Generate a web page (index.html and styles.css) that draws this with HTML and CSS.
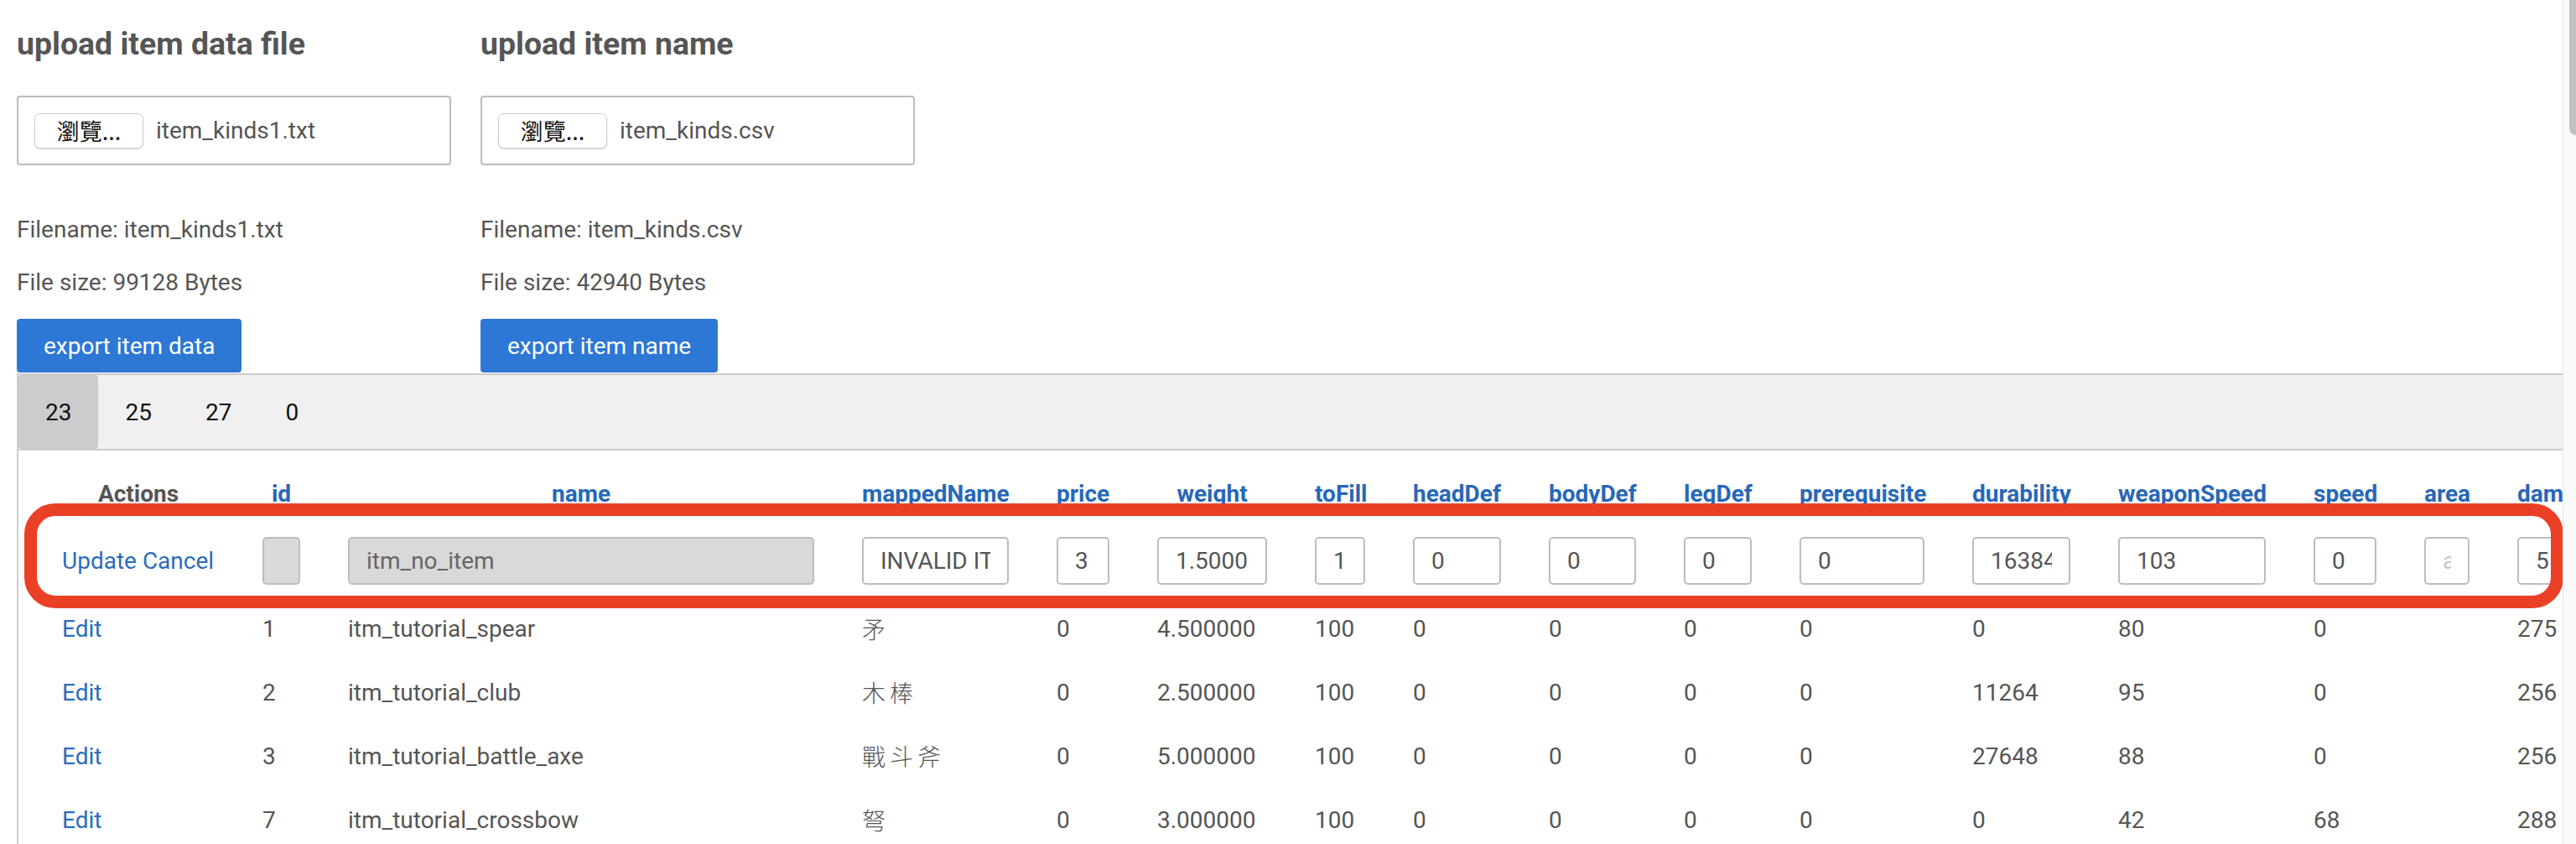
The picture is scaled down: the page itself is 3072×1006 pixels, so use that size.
FILE: index.html
```html
<!DOCTYPE html>
<html lang="zh-Hant">
<head>
<meta charset="utf-8">
<title>Item editor</title>
<link rel="stylesheet" href="styles.css">
</head>
<body>
<div class="uploads">
  <section class="upload">
    <h3 class="upload-title">upload item data file</h3>
    <div class="file-box"><span class="browse">瀏覽...</span><span class="file-name">item_kinds1.txt</span></div>
    <p class="meta meta-first">Filename: item_kinds1.txt</p>
    <p class="meta">File size: 99128 Bytes</p>
    <button class="export" type="button">export item data</button>
  </section>
  <section class="upload">
    <h3 class="upload-title">upload item name</h3>
    <div class="file-box"><span class="browse">瀏覽...</span><span class="file-name">item_kinds.csv</span></div>
    <p class="meta meta-first">Filename: item_kinds.csv</p>
    <p class="meta">File size: 42940 Bytes</p>
    <button class="export" type="button">export item name</button>
  </section>
</div>

<div class="tabs-wrap">
  <div class="tabbar">
    <span class="tab active">23</span>
    <span class="tab">25</span>
    <span class="tab">27</span>
    <span class="tab">0</span>
  </div>

  <div class="grid">
    <div class="row head">
      <span class="th th-plain">Actions</span>
      <span class="th">id</span>
      <span class="th">name</span>
      <span class="th">mappedName</span>
      <span class="th">price</span>
      <span class="th">weight</span>
      <span class="th">toFill</span>
      <span class="th">headDef</span>
      <span class="th">bodyDef</span>
      <span class="th">legDef</span>
      <span class="th">prerequisite</span>
      <span class="th">durability</span>
      <span class="th">weaponSpeed</span>
      <span class="th">speed</span>
      <span class="th">area</span>
      <span class="th th-last">damage</span>
    </div>

    <div class="row edit">
      <span class="cell"><a class="link" href="#">Update</a> <a class="link" href="#">Cancel</a></span>
      <span class="cell"><input class="inp" type="text" disabled value=""></span>
      <span class="cell"><input class="inp" type="text" disabled value="itm_no_item"></span>
      <span class="cell"><input class="inp" type="text" value="INVALID ITEM"></span>
      <span class="cell"><input class="inp" type="text" value="3"></span>
      <span class="cell"><input class="inp" type="text" value="1.5000"></span>
      <span class="cell"><input class="inp" type="text" value="1"></span>
      <span class="cell"><input class="inp" type="text" value="0"></span>
      <span class="cell"><input class="inp" type="text" value="0"></span>
      <span class="cell"><input class="inp" type="text" value="0"></span>
      <span class="cell"><input class="inp" type="text" value="0"></span>
      <span class="cell"><input class="inp" type="text" value="16384"></span>
      <span class="cell"><input class="inp" type="text" value="103"></span>
      <span class="cell"><input class="inp" type="text" value="0"></span>
      <span class="cell"><input class="inp" type="text" placeholder="area"></span>
      <span class="cell"><input class="inp" type="text" value="512"></span>
    </div>

    <div class="row data">
      <span class="cell"><a class="link" href="#">Edit</a></span>
      <span class="cell">1</span>
      <span class="cell">itm_tutorial_spear</span>
      <span class="cell cjk">矛</span>
      <span class="cell">0</span>
      <span class="cell">4.500000</span>
      <span class="cell">100</span>
      <span class="cell">0</span>
      <span class="cell">0</span>
      <span class="cell">0</span>
      <span class="cell">0</span>
      <span class="cell">0</span>
      <span class="cell">80</span>
      <span class="cell">0</span>
      <span class="cell"></span>
      <span class="cell">275</span>
    </div>

    <div class="row data">
      <span class="cell"><a class="link" href="#">Edit</a></span>
      <span class="cell">2</span>
      <span class="cell">itm_tutorial_club</span>
      <span class="cell cjk">木棒</span>
      <span class="cell">0</span>
      <span class="cell">2.500000</span>
      <span class="cell">100</span>
      <span class="cell">0</span>
      <span class="cell">0</span>
      <span class="cell">0</span>
      <span class="cell">0</span>
      <span class="cell">11264</span>
      <span class="cell">95</span>
      <span class="cell">0</span>
      <span class="cell"></span>
      <span class="cell">256</span>
    </div>

    <div class="row data">
      <span class="cell"><a class="link" href="#">Edit</a></span>
      <span class="cell">3</span>
      <span class="cell">itm_tutorial_battle_axe</span>
      <span class="cell cjk">戰斗斧</span>
      <span class="cell">0</span>
      <span class="cell">5.000000</span>
      <span class="cell">100</span>
      <span class="cell">0</span>
      <span class="cell">0</span>
      <span class="cell">0</span>
      <span class="cell">0</span>
      <span class="cell">27648</span>
      <span class="cell">88</span>
      <span class="cell">0</span>
      <span class="cell"></span>
      <span class="cell">256</span>
    </div>

    <div class="row data">
      <span class="cell"><a class="link" href="#">Edit</a></span>
      <span class="cell">7</span>
      <span class="cell">itm_tutorial_crossbow</span>
      <span class="cell cjk">弩</span>
      <span class="cell">0</span>
      <span class="cell">3.000000</span>
      <span class="cell">100</span>
      <span class="cell">0</span>
      <span class="cell">0</span>
      <span class="cell">0</span>
      <span class="cell">0</span>
      <span class="cell">0</span>
      <span class="cell">42</span>
      <span class="cell">68</span>
      <span class="cell"></span>
      <span class="cell">288</span>
    </div>
  </div>
</div>

<div class="annot"></div>
<div class="scrollbar"><div class="thumb"></div></div>
</body>
</html>
```

FILE: styles.css
```css
html {
  overflow: hidden;
}

body {
  margin: 0;
  padding: 30px 0 0 20px;
  font-family: Roboto, "Noto Sans CJK TC", sans-serif;
  font-size: 28px;
  color: #555555;
  background: #ffffff;
}

/* ---------- upload section ---------- */
.uploads {
  display: flex;
  gap: 35px;
}

.upload {
  width: 518px;
  display: flex;
  flex-direction: column;
  align-items: flex-start;
}

.upload-title {
  margin: 0;
  font-size: 37.44px;
  line-height: 44px;
  font-weight: 700;
  color: #555555;
  white-space: nowrap;
}

.file-box {
  align-self: stretch;
  margin-top: 40px;
  height: 83px;
  box-sizing: border-box;
  border: 2px solid #bdbdbd;
  border-radius: 4px;
  display: flex;
  align-items: center;
  gap: 15px;
  padding-left: 19px;
}

.browse {
  width: 130px;
  height: 42px;
  box-sizing: border-box;
  border: 1px solid #d0d0d0;
  border-radius: 7px;
  box-shadow: 0 1px 2px rgba(0, 0, 0, 0.18);
  background: #ffffff;
  display: flex;
  align-items: center;
  justify-content: center;
  color: #111111;
  font-family: "Noto Sans CJK TC", Roboto, sans-serif;
  font-size: 27px;
}

.file-name {
  color: #555555;
}

.meta {
  margin: 23px 0 0;
  line-height: 40px;
  white-space: nowrap;
}

.meta-first {
  margin-top: 57px;
}

.export {
  margin-top: 23px;
  height: 64px;
  padding: 0 32px;
  border: 0;
  border-radius: 4px;
  background: #2d77d5;
  color: #ffffff;
  font-family: Roboto, sans-serif;
  font-size: 28px;
  white-space: nowrap;
}

/* ---------- tabs ---------- */
.tabs-wrap {
  margin-top: 1px;
  border-left: 2px solid #cccccc;
  overflow: hidden;
}

.tabbar {
  display: flex;
  height: 88px;
  background: #f0f0f0;
  border-top: 2px solid #cccccc;
  border-bottom: 2px solid #cccccc;
}

.tab {
  display: flex;
  align-items: center;
  padding: 0 32px;
  color: #111111;
}

.tab.active {
  background: #cccccc;
  border-radius: 4px;
}

/* ---------- grid table ---------- */
.grid {
  padding-top: 14px;
}

.row {
  display: grid;
  grid-template-columns: 182px 45px 556px 175px 63px 131px 60px 105px 104px 81px 149px 117px 176px 75px 54px max-content;
  column-gap: 57px;
  padding-left: 52px;
  align-items: center;
}

.head {
  height: 74px;
}

.edit {
  height: 86px;
}

.data {
  height: 76px;
}

.th {
  font-weight: 700;
  color: #2767b8;
  text-align: center;
  white-space: nowrap;
}

.th-plain {
  color: #555555;
}

.th-last {
  text-align: left;
}

.cell {
  white-space: nowrap;
  color: #555555;
}

.cjk {
  font-family: "Noto Sans CJK TC", sans-serif;
  font-weight: 300;
  letter-spacing: 5px;
}

.link {
  color: #2a6dbd;
  text-decoration: none;
}

.inp {
  display: block;
  width: 100%;
  height: 57px;
  box-sizing: border-box;
  margin: 0;
  border: 2px solid #bdbdbd;
  border-radius: 5px;
  padding: 0 20px 0 20px;
  font-family: Roboto, sans-serif;
  font-size: 28px;
  color: #555555;
  background: #ffffff;
  outline: none;
}

.inp:disabled {
  background: #d9d9d9;
  color: #666666;
}

.inp::placeholder {
  color: #c4c4c4;
}

/* ---------- overlays ---------- */
.annot {
  position: absolute;
  left: 29px;
  top: 600px;
  width: 3028px;
  height: 125px;
  box-sizing: border-box;
  border: 15px solid #ea4026;
  border-radius: 37px;
  pointer-events: none;
  z-index: 5;
}

.scrollbar {
  position: fixed;
  top: 0;
  right: 0;
  width: 16px;
  height: 100%;
  box-sizing: border-box;
  background: #f9f9f9;
  border-left: 1px solid #e6e6e6;
  z-index: 10;
}

.thumb {
  position: absolute;
  top: 0;
  left: 7px;
  right: 0;
  height: 161px;
  background: #c1c1c1;
  border-radius: 0 0 0 8px;
}
```
